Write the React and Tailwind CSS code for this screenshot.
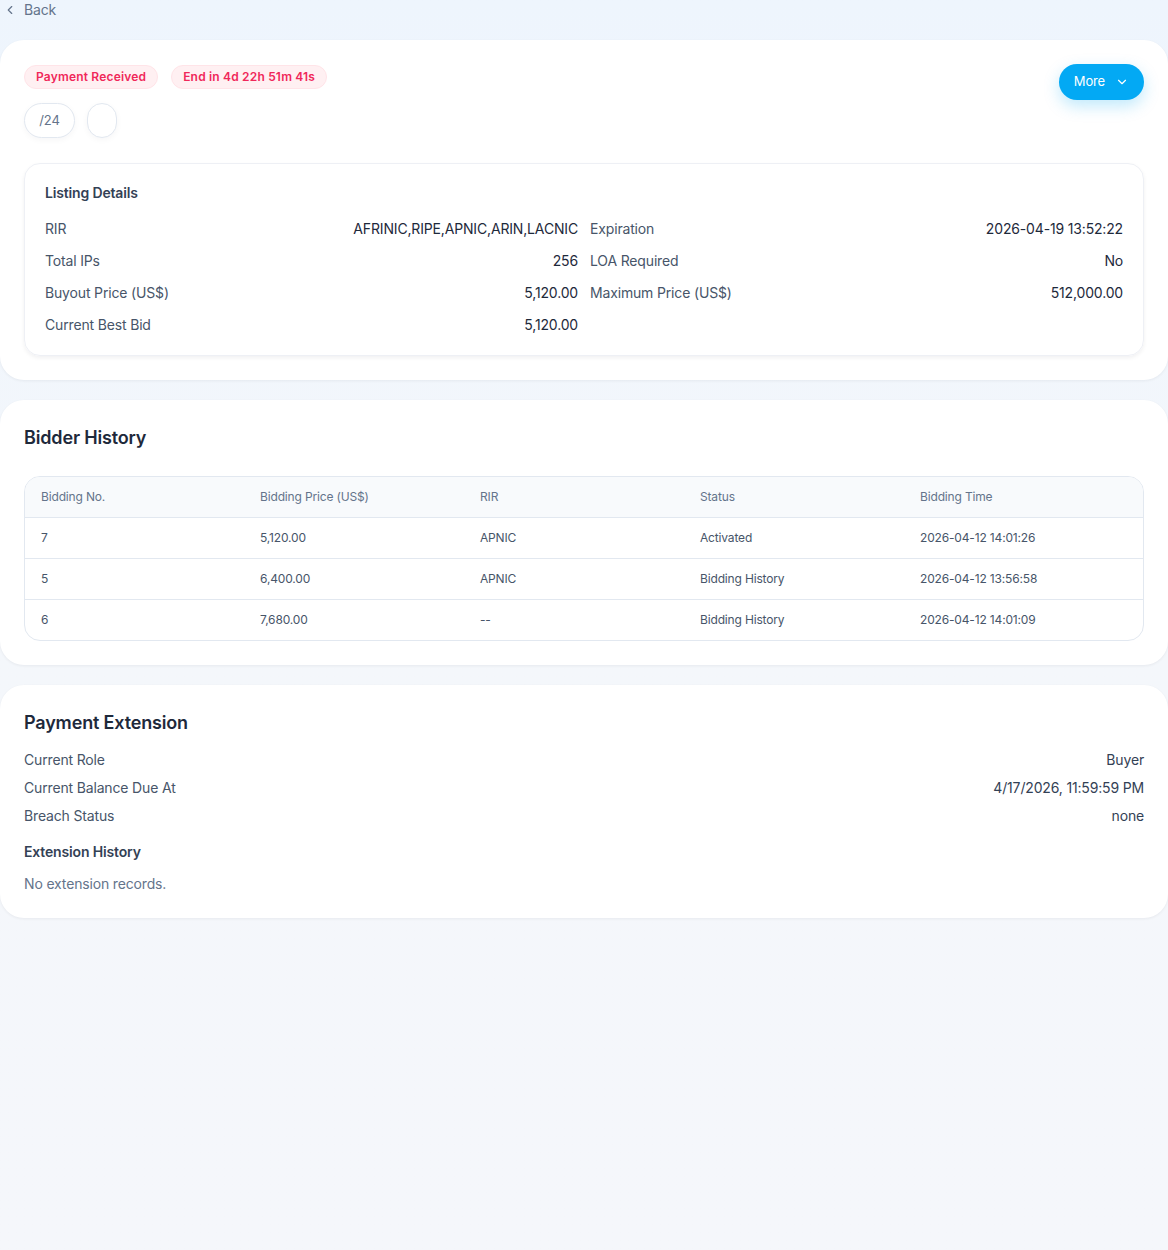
import { ChevronLeft, ChevronDown } from "lucide-react";

const listing = [
  ["RIR", "AFRINIC,RIPE,APNIC,ARIN,LACNIC", "Expiration", "2026-04-19 13:52:22"],
  ["Total IPs", "256", "LOA Required", "No"],
  ["Buyout Price (US$)", "5,120.00", "Maximum Price (US$)", "512,000.00"],
  ["Current Best Bid", "5,120.00", null, null],
];

const bids = [
  ["7", "5,120.00", "APNIC", "Activated", "2026-04-12 14:01:26"],
  ["5", "6,400.00", "APNIC", "Bidding History", "2026-04-12 13:56:58"],
  ["6", "7,680.00", "--", "Bidding History", "2026-04-12 14:01:09"],
];

const extension = [
  ["Current Role", "Buyer"],
  ["Current Balance Due At", "4/17/2026, 11:59:59 PM"],
  ["Breach Status", "none"],
];

const cols = "grid grid-cols-[219px_220px_220px_220px_1fr]";

const App = () => {
  return (
    <div
      className="min-h-[1250px] bg-gradient-to-b from-[#eef5fd] via-[#f4f7fb] to-[#f5f7fb] text-[#1e293b] tracking-[-0.01em]"
      style={{ fontFamily: "Inter, 'Noto Sans', sans-serif" }}
    >
      <div className="flex items-center h-[20px] gap-[7px] pl-[3px] text-sm text-[#64748b]">
        <ChevronLeft size={14} strokeWidth={2} />
        <span>Back</span>
      </div>

      <div className="flex flex-col gap-5 mt-5">
        {/* header card */}
        <div className="bg-white rounded-3xl p-6 shadow-[0_1px_3px_rgba(15,23,42,0.06)]">
          <div className="flex justify-between">
            <div className="flex flex-col gap-[14px] pt-[1px]">
              <div className="flex gap-[13px]">
                <span className="h-6 px-[11px] flex items-center rounded-full bg-[#fff0f2] border border-[#ffe4e8] text-[#f0285a] text-xs font-semibold tracking-[0.015em]">
                  Payment Received
                </span>
                <span className="h-6 px-[11px] flex items-center rounded-full bg-[#fff0f2] border border-[#ffe4e8] text-[#f0285a] text-xs font-semibold tracking-[0.015em]">
                  End in 4d 22h 51m 41s
                </span>
              </div>
              <div className="flex gap-3">
                <span className="h-[35px] w-[51px] flex items-center justify-center rounded-full border border-[#e2e8f0] bg-white text-[13px] text-[#64748b] shadow-[0_2px_6px_rgba(15,23,42,0.04)]">
                  /24
                </span>
                <span className="h-[35px] w-[30px] rounded-full border border-[#e2e8f0] bg-white shadow-[0_2px_6px_rgba(15,23,42,0.04)]"></span>
              </div>
            </div>
            <button className="h-9 px-[15px] flex items-center gap-[10px] rounded-full bg-[#03a9f4] text-white text-[13px] shadow-[0_6px_16px_rgba(3,169,244,0.25)]">
              More
              <ChevronDown size={14} strokeWidth={2} />
            </button>
          </div>

          <div className="mt-[25px] border border-[#eef0f5] rounded-2xl px-5 pt-[19px] pb-[20px] shadow-[0_2px_4px_rgba(15,23,42,0.06)]">
            <div className="text-sm font-semibold text-[#334155] leading-5">Listing Details</div>
            <div className="mt-4 flex flex-col gap-3">
              {listing.map((r, i) => (
                <div key={i} className="grid grid-cols-2 gap-3 text-sm leading-5">
                  <div className="flex justify-between">
                    <span className="text-[#475569]">{r[0]}</span>
                    <span className="text-[#1e293b]">{r[1]}</span>
                  </div>
                  {r[2] ? (
                    <div className="flex justify-between">
                      <span className="text-[#475569]">{r[2]}</span>
                      <span className="text-[#1e293b]">{r[3]}</span>
                    </div>
                  ) : (
                    <div></div>
                  )}
                </div>
              ))}
            </div>
          </div>
        </div>

        {/* bidder history */}
        <div className="bg-white rounded-3xl px-6 pt-[26px] pb-6 shadow-[0_1px_3px_rgba(15,23,42,0.06)]">
          <h2 className="text-lg font-semibold text-[#1e293b] leading-6">Bidder History</h2>
          <div className="mt-[26px] border border-[#e2e8f0] rounded-2xl overflow-hidden text-xs">
            <div className={`${cols} h-[41px] items-center bg-[#f8fafc] text-[#64748b] px-4 border-b border-[#e2e8f0]`}>
              <span>Bidding No.</span>
              <span>Bidding Price (US$)</span>
              <span>RIR</span>
              <span>Status</span>
              <span>Bidding Time</span>
            </div>
            {bids.map((b, i) => (
              <div
                key={i}
                className={`${cols} items-center px-4 text-[#475569] ${i < bids.length - 1 ? "h-[41px] border-b border-[#e2e8f0]" : "h-10"}`}
              >
                {b.map((c, j) => (
                  <span key={j}>{c}</span>
                ))}
              </div>
            ))}
          </div>
        </div>

        {/* payment extension */}
        <div className="bg-white rounded-3xl px-6 pt-[26px] pb-[24px] shadow-[0_1px_3px_rgba(15,23,42,0.06)]">
          <h2 className="text-lg font-semibold text-[#1e293b] leading-6">Payment Extension</h2>
          <div className="mt-[15px] flex flex-col gap-2 text-sm leading-5">
            {extension.map((r, i) => (
              <div key={i} className="flex justify-between">
                <span className="text-[#475569]">{r[0]}</span>
                <span className="text-[#334155]">{r[1]}</span>
              </div>
            ))}
          </div>
          <div className="mt-4 text-sm font-semibold text-[#334155] leading-5">Extension History</div>
          <div className="mt-3 text-sm text-[#64748b] leading-5">No extension records.</div>
        </div>
      </div>
    </div>
  );
};

export default App;
